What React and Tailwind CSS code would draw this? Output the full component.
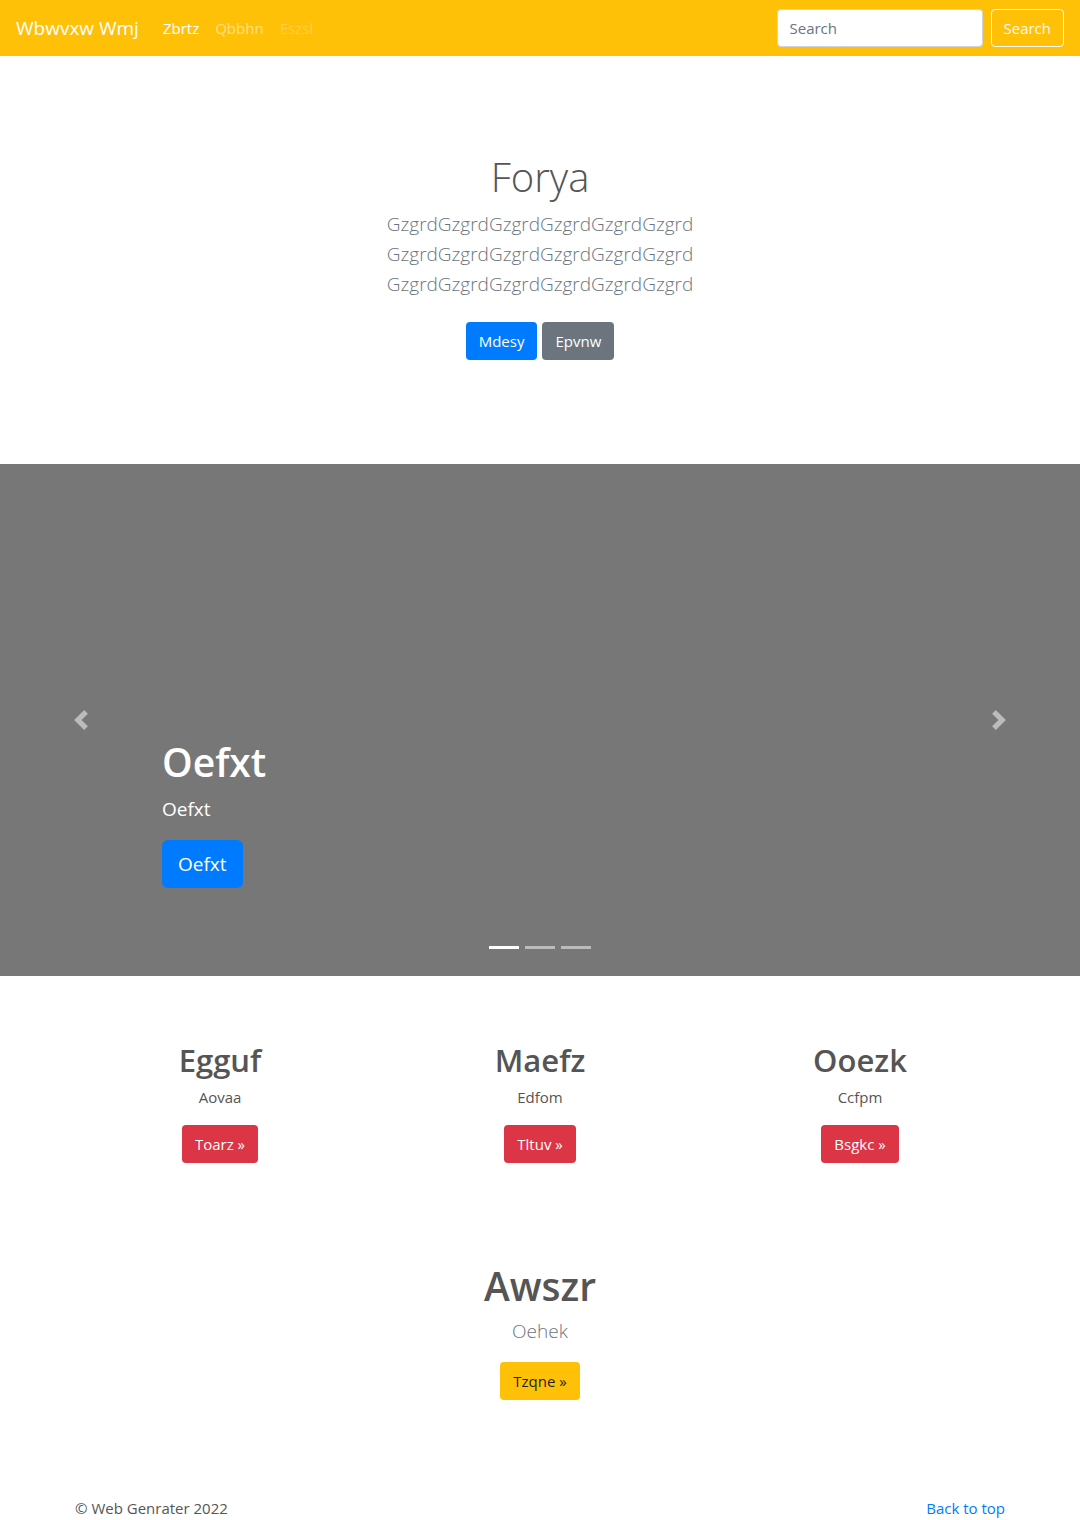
import React from "react";

const font = { fontFamily: '"Open Sans", "Noto Sans", sans-serif' };

// Bootstrap-ish carousel chevrons
const ChevronLeft = () => (
  <svg viewBox="0 0 8 8" className="w-5 h-5" fill="#fff">
    <path d="M5.25 0l-4 4 4 4 1.5-1.5L4.25 4l2.5-2.5L5.25 0z" />
  </svg>
);

const ChevronRight = () => (
  <svg viewBox="0 0 8 8" className="w-5 h-5" fill="#fff">
    <path d="M2.75 0l-1.5 1.5L3.75 4l-2.5 2.5L2.75 8l4-4-4-4z" />
  </svg>
);

const features = [
  { title: "Egguf", text: "Aovaa", btn: "Toarz" },
  { title: "Maefz", text: "Edfom", btn: "Tltuv" },
  { title: "Ooezk", text: "Ccfpm", btn: "Bsgkc" },
];

const Navbar = () => (
  <nav className="h-14 bg-[#ffc107] flex items-center px-4">
    <a className="text-white text-[19px] mr-4 leading-[30px]">Wbwvxw Wmj</a>
    <div className="flex items-center text-[15px]">
      <a className="px-2 text-white">Zbrtz</a>
      <a className="px-2 text-white/50">Qbbhn</a>
      <a className="px-2 text-white/25">Eszsl</a>
    </div>
    <div className="ml-auto flex items-center">
      <input
        type="text"
        placeholder="Search"
        className="w-[206px] h-[38px] px-3 bg-white border border-[#ced4da] rounded text-[15px] text-[#495057] placeholder:text-[#6c757d] mr-2"
      />
      <button className="h-[38px] px-3 border border-[#f8f9fa] text-[#f8f9fa] rounded text-[15px]">
        Search
      </button>
    </div>
  </nav>
);

const Hero = () => (
  <section className="h-[408px] pt-[97px] text-center">
    <h1 className="text-[40px] leading-[48px] font-light text-[#555] mb-2">Forya</h1>
    <p className="text-[19px] leading-[30px] font-light text-[#6c757d]">
      GzgrdGzgrdGzgrdGzgrdGzgrdGzgrd
      <br />
      GzgrdGzgrdGzgrdGzgrdGzgrdGzgrd
      <br />
      GzgrdGzgrdGzgrdGzgrdGzgrdGzgrd
    </p>
    <div className="mt-[23px] flex justify-center gap-[5px] text-[15px]">
      <a className="h-[38px] px-[13px] flex items-center rounded bg-[#007bff] text-white">Mdesy</a>
      <a className="h-[38px] px-[13px] flex items-center rounded bg-[#6c757d] text-white">Epvnw</a>
    </div>
  </section>
);

const Carousel = () => (
  <section className="relative h-[512px] bg-[#777]">
    <div className="h-full flex flex-col justify-end pl-[15%] pb-[88px]">
      <h1 className="text-[39px] leading-[48px] font-semibold text-white mb-2">Oefxt</h1>
      <p className="text-[19px] leading-[30px] text-white mb-4">Oefxt</p>
      <div>
        <a className="inline-flex items-center h-12 px-4 rounded-md bg-[#007bff] text-white text-[19px]">
          Oefxt
        </a>
      </div>
    </div>

    <a className="absolute left-0 top-0 bottom-0 w-[15%] flex items-center justify-center opacity-50">
      <ChevronLeft />
    </a>
    <a className="absolute right-0 top-0 bottom-0 w-[15%] flex items-center justify-center opacity-50">
      <ChevronRight />
    </a>

    <div className="absolute left-0 right-0 bottom-[27px] flex justify-center gap-[6px]">
      <span className="w-[30px] h-[3px] bg-white" />
      <span className="w-[30px] h-[3px] bg-white/50" />
      <span className="w-[30px] h-[3px] bg-white/50" />
    </div>
  </section>
);

const Features = () => (
  <section className="w-[960px] mx-auto pt-[65px]">
    <div className="grid grid-cols-3">
      {features.map((f) => (
        <div key={f.title} className="text-center">
          <h2 className="text-[31px] leading-[38px] font-semibold text-[#555] mb-[6px]">{f.title}</h2>
          <p className="text-[15px] leading-6 text-[#555] mb-4">{f.text}</p>
          <div className="flex justify-center text-[15px]">
            <a className="h-[38px] px-[13px] flex items-center rounded bg-[#dc3545] text-white">
              {f.btn} &raquo;
            </a>
          </div>
        </div>
      ))}
    </div>

    <div className="text-center pt-[99px]">
      <h1 className="text-[39px] leading-[48px] font-semibold text-[#555] mb-[6px]">Awszr</h1>
      <p className="text-[19px] leading-[30px] font-light text-[#6c757d] mb-4">Oehek</p>
      <div className="flex justify-center text-[15px]">
        <a className="h-[38px] px-[13px] flex items-center rounded bg-[#ffc107] text-[#212529]">
          Tzqne &raquo;
        </a>
      </div>
    </div>
  </section>
);

const Footer = () => (
  <footer className="w-[960px] mx-auto px-[15px] pt-24 flex justify-between">
    <p className="text-[15px] leading-6 text-[#555]">&copy; Web Genrater 2022</p>
    <a className="text-[15px] leading-6 text-[#007bff]">Back to top</a>
  </footer>
);

export default function App() {
  return (
    <div className="bg-white min-h-[1520px]" style={font}>
      <Navbar />
      <Hero />
      <Carousel />
      <Features />
      <Footer />
    </div>
  );
}
